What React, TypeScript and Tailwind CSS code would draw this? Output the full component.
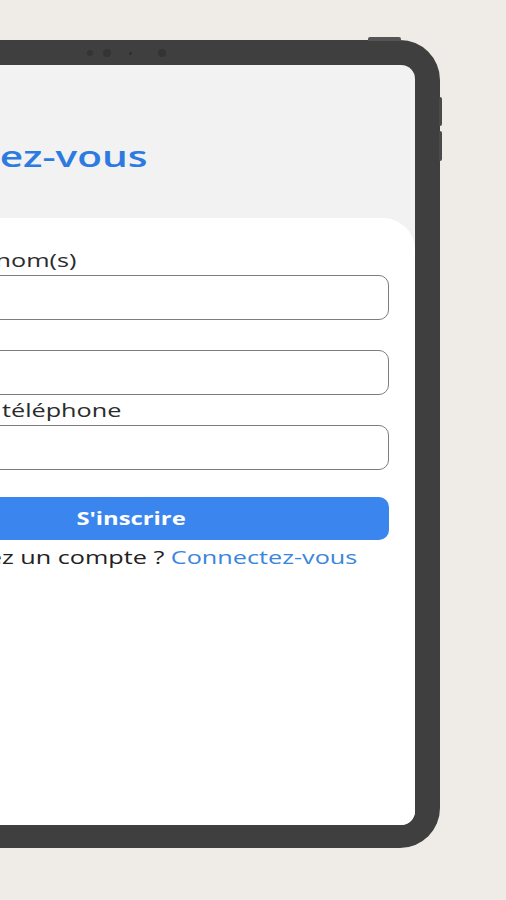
const stretch = "inline-block origin-left scale-x-[1.4] whitespace-nowrap";

export default function App() {
  return (
    <div className="h-[900px] w-[506px] overflow-hidden bg-[#efebe6] pt-[40px] font-['Open_Sans',sans-serif]">
      <div className="relative ml-[-178px] h-[808px] w-[618px] rounded-[40px] bg-[#3f3f3f] pb-[23px] pl-[25px] pr-[25px] pt-[25px]">
        {/* top button */}
        <div className="absolute left-[546px] top-[-3px] h-[4px] w-[33px] rounded-t-[2px] bg-[#555555]" />
        {/* side buttons */}
        <div className="absolute right-[-2px] top-[57px] h-[29px] w-[3px] rounded-r-[2px] bg-[#4a4a4a]" />
        <div className="absolute right-[-2px] top-[91px] h-[30px] w-[3px] rounded-r-[2px] bg-[#4a4a4a]" />
        {/* camera */}
        <div className="absolute left-[265px] top-[10px] h-[6px] w-[6px] rounded-full bg-[#343434]" />
        <div className="absolute left-[281px] top-[9px] h-[8px] w-[8px] rounded-full bg-[#343434]" />
        <div className="absolute left-[307px] top-[12px] h-[3px] w-[3px] rounded-full bg-[#2e2e2e]" />
        <div className="absolute left-[336px] top-[9px] h-[8px] w-[8px] rounded-full bg-[#343434]" />

        <div className="flex h-full flex-col overflow-hidden rounded-[14px] bg-[#f2f2f2]">
          <div className="flex h-[153px] items-center pl-[24px] pt-[28px]">
            <h1 className="text-[29px] font-semibold leading-none text-[#2d7be0]">
              <span className={stretch}>Inscrivez-vous</span>
            </h1>
          </div>
          <div className="flex-1 rounded-t-[32px] bg-white px-[26px] pt-[30px]">
            <form className="flex flex-col" onSubmit={(e) => e.preventDefault()}>
              <label className="ml-[-11px] text-[18px] leading-[24px] text-[#2b2b2b]">
                <span className={stretch}>Nom et prénom(s)</span>
              </label>
              <input className="mt-[3px] h-[45px] rounded-[10px] border border-[#7d7d7d] bg-white px-3 outline-none" />
              <label className="ml-[-11px] mt-[3px] text-[18px] leading-[24px] text-[#2b2b2b]">
                <span className={stretch}>Email</span>
              </label>
              <input className="mt-[3px] h-[45px] rounded-[10px] border border-[#7d7d7d] bg-white px-3 outline-none" />
              <label className="ml-[-11px] mt-[3px] text-[18px] leading-[24px] text-[#2b2b2b]">
                <span className={stretch}>Numéro de téléphone</span>
              </label>
              <input className="mt-[3px] h-[45px] rounded-[10px] border border-[#7d7d7d] bg-white px-3 outline-none" />
              <button className="mt-[27px] h-[43px] rounded-[10px] bg-[#3b86ee] text-[17px] font-bold text-white">
                <span className="inline-block scale-x-[1.4]">S'inscrire</span>
              </button>
              <p className="ml-[24px] mt-[5px] text-[18px] leading-[24px] text-[#222222]">
                <span className={stretch}>
                  Vous avez un compte ? <span className="text-[#3a86dd]">Connectez-vous</span>
                </span>
              </p>
            </form>
          </div>
        </div>
      </div>
    </div>
  );
}
